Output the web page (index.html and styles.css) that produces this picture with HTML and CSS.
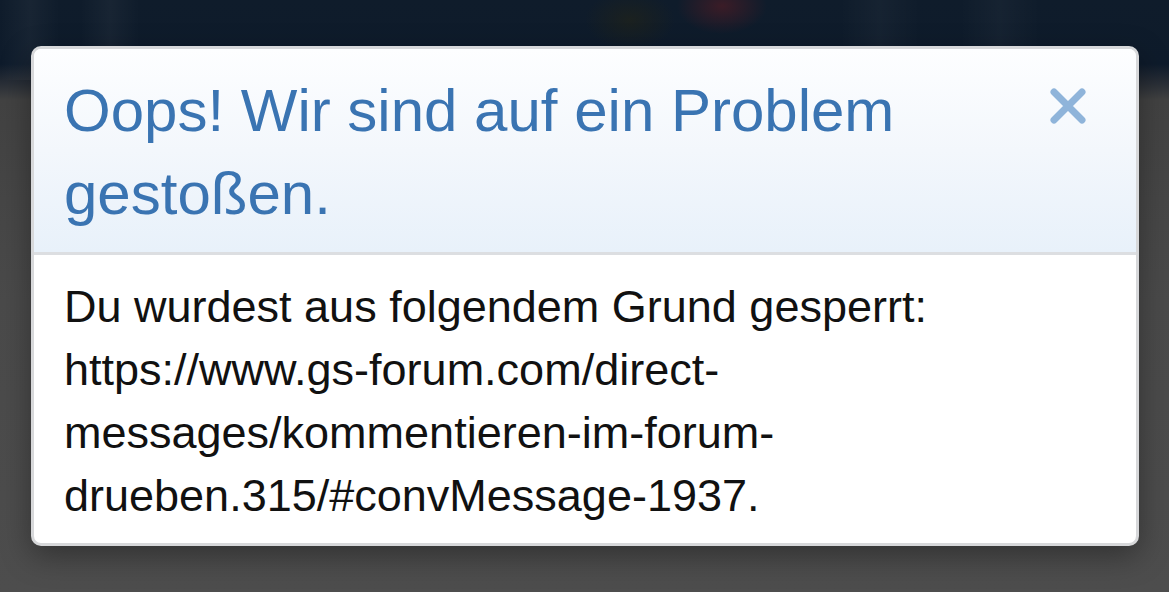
FILE: index.html
```html
<!DOCTYPE html>
<html lang="de">
<head>
<meta charset="utf-8">
<title>Oops!</title>
<link rel="stylesheet" href="styles.css">
</head>
<body>
<div class="page">
  <div class="backdrop-top"></div>
  <div class="modal">
    <div class="modal-header">
      <h2 class="modal-title">Oops! Wir sind auf ein Problem gestoßen.</h2>
      <button class="close" aria-label="Schließen">
        <svg viewBox="0 0 36 36" width="36" height="36" aria-hidden="true">
          <path d="M4 4 L32 32 M32 4 L4 32" stroke="#8fb4da" stroke-width="7" stroke-linecap="round" fill="none"/>
        </svg>
      </button>
    </div>
    <div class="modal-body">
      <p class="message">Du wurdest aus folgendem Grund gesperrt:<br>https://www.gs-forum.com/direct-<br>messages/kommentieren-im-forum-<br>drueben.315/#convMessage-1937.</p>
    </div>
  </div>
</div>
</body>
</html>
```
FILE: styles.css
```css
html, body {
  margin: 0;
  padding: 0;
  height: 100%;
}

body {
  font-family: "Liberation Sans", Arial, Helvetica, sans-serif;
  background: #4b4b4b;
  overflow: hidden;
}

.page {
  position: relative;
  min-height: 592px;
  padding-top: 46px;
  box-sizing: border-box;
  background:
    radial-gradient(ellipse 45px 28px at 722px 6px, rgba(95, 28, 35, 0.55), rgba(95, 28, 35, 0) 100%),
    radial-gradient(ellipse 45px 30px at 630px 20px, rgba(30, 34, 28, 0.8), rgba(30, 34, 28, 0) 100%),
    linear-gradient(to bottom, #0f1c2b 0, #0e1b2b 64px, #2a2f37 84px, #424242 100px, #4a4a4a 300px, #4d4d4d 592px);
}

.backdrop-top {
  position: absolute;
  left: 0;
  right: 0;
  top: 0;
  height: 80px;
  background:
    linear-gradient(to right,
      rgba(255,255,255,0) 0, rgba(255,255,255,0.04) 30px, rgba(255,255,255,0) 60px,
      rgba(255,255,255,0) 80px, rgba(255,255,255,0.04) 110px, rgba(255,255,255,0) 140px,
      rgba(255,255,255,0) 840px, rgba(255,255,255,0.03) 880px, rgba(255,255,255,0) 920px,
      rgba(255,255,255,0) 960px, rgba(255,255,255,0.03) 1000px, rgba(255,255,255,0) 1040px);
  pointer-events: none;
}

.modal {
  position: relative;
  margin: 0 30px 0 31px;
  border: 3px solid #d7d8da;
  border-radius: 10px;
  background: #ffffff;
  overflow: hidden;
  box-shadow: 0 10px 30px rgba(0, 0, 0, 0.35);
}

.modal-header {
  position: relative;
  padding: 20px 140px 17px 30px;
  background: linear-gradient(to bottom, #fdfeff 0%, #f3f7fc 50%, #e8f1fa 100%);
  border-bottom: 3px solid #dcdee1;
}

.modal-title {
  margin: 0;
  font-weight: normal;
  font-size: 60px;
  line-height: 83px;
  color: #3a74b2;
}

.close {
  position: absolute;
  top: 39px;
  right: 50px;
  width: 36px;
  height: 36px;
  padding: 0;
  border: 0;
  background: transparent;
  cursor: pointer;
}

.close svg {
  display: block;
}

.modal-body {
  padding: 20px 30px 16px 30px;
}

.message {
  margin: 0;
  font-size: 45px;
  line-height: 63px;
  color: #111111;
}
```
